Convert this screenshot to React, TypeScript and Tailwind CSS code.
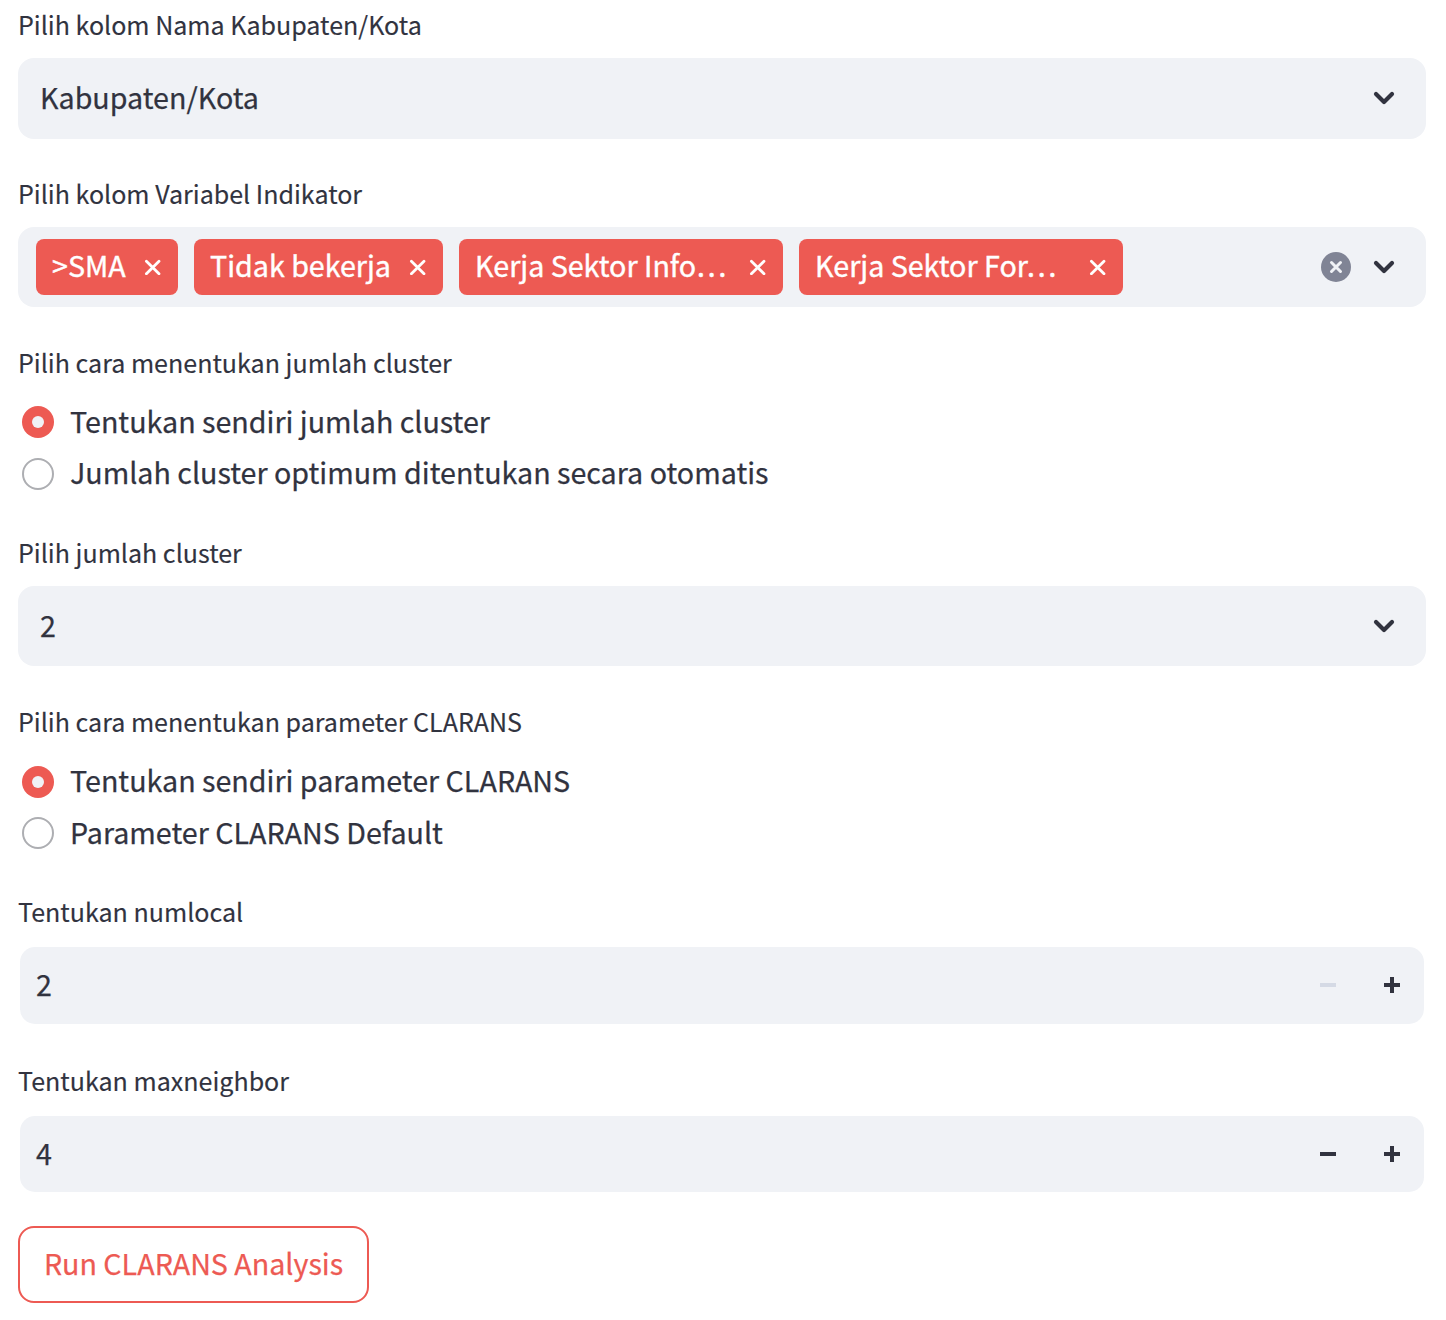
import React from "react";

function Field({ label, height, children }: { label: string; height: string; children: React.ReactNode }) {
  return (
    <section className={height}>
      <div className="h-[58px] pt-1 text-[25.06px] leading-[40px] [-webkit-text-stroke:0.15px]">
        <span>{label}</span>
      </div>
      {children}
    </section>
  );
}

function Chevron() {
  return (
    <svg width="32" height="32" viewBox="0 0 32 32" fill="none" className="shrink-0">
      <path d="M8 12L16 20L24 12" stroke="#31333f" strokeWidth="4.2" strokeLinecap="round" strokeLinejoin="round" />
    </svg>
  );
}

function SelectBox({ value, height }: { value: string; height: string }) {
  return (
    <div className={`${height} flex items-center justify-between rounded-2xl bg-[#f0f2f6] pl-[22px] pr-[26px]`}>
      <span className="block pb-0.5 leading-[46px]">{value}</span>
      <Chevron />
    </div>
  );
}

function Tag({ label, width }: { label: string; width: string }) {
  return (
    <div className={`${width} flex h-14 items-center justify-between rounded-lg bg-[#ed5a53] pl-4 pr-[17px] text-white`}>
      <span className="block whitespace-nowrap pb-1 leading-[46px] [-webkit-text-stroke:0.4px]">{label}</span>
      <svg width="17" height="16" viewBox="0 0 17 16" fill="none" className="shrink-0">
        <path d="M2.4 2.2L15 14.8M15 2.2L2.4 14.8" stroke="white" strokeWidth="2.8" strokeLinecap="round" />
      </svg>
    </div>
  );
}

function Radio({ label, checked, row = "h-[52px]", text = "pb-0.5" }: { label: string; checked?: boolean; row?: string; text?: string }) {
  return (
    <div className={`${row} flex items-center gap-4 pl-1`}>
      {checked ? (
        <span className="flex size-8 items-center justify-center rounded-full bg-[#ed5a53]">
          <span className="size-3 rounded-full bg-[#f0f2f6]" />
        </span>
      ) : (
        <span className="size-8 rounded-full border-2 border-[#adaeb2] bg-white" />
      )}
      <span className={`${text} block leading-[42px]`}>{label}</span>
    </div>
  );
}

function NumberInput({ value, height, atMinimum }: { value: string; height: string; atMinimum?: boolean }) {
  return (
    <div className={`${height} mx-0.5 mt-0.5 flex items-center rounded-[15px] bg-[#f0f2f6] pl-4 pr-6`}>
      <span className="block flex-1 pb-0.5 leading-[42px]">{value}</span>
      <svg width="16" height="16" viewBox="0 0 16 16" className="mr-12">
        <path d="M0 6H16V10H0Z" fill={atMinimum ? "#d5dae5" : "#31333f"} />
      </svg>
      <svg width="16" height="16" viewBox="0 0 16 16">
        <path d="M0 6H6V0H10V6H16V10H10V16H6V10H0Z" fill="#31333f" />
      </svg>
    </div>
  );
}

export default function App() {
  return (
    <div className="h-[1320px] bg-white pl-[18px] pr-5 font-['Noto_Sans_CJK_SC',sans-serif] text-[28.65px] text-[#31333f] [-webkit-text-stroke:0.25px]">
      <Field label="Pilih kolom Nama Kabupaten/Kota" height="h-[169px]">
        <SelectBox value="Kabupaten/Kota" height="h-[80.67px]" />
      </Field>
      <Field label="Pilih kolom Variabel Indikator" height="h-[169px]">
        <div className="flex h-20 items-center gap-4 rounded-2xl bg-[#f0f2f6] pl-[18px] pr-[26px]">
          <Tag label=">SMA" width="w-[142px]" />
          <Tag label="Tidak bekerja" width="w-[249px]" />
          <Tag label="Kerja Sektor Info…" width="w-[324px]" />
          <Tag label="Kerja Sektor For…" width="w-[324px]" />
          <div className="ml-auto flex items-center gap-[17px]">
            <svg width="30" height="30" viewBox="0 0 30 30" fill="none">
              <circle cx="15" cy="15" r="15" fill="#808495" />
              <path d="M10.5 10.5L19.5 19.5M19.5 10.5L10.5 19.5" stroke="#f0f2f6" strokeWidth="3" strokeLinecap="round" />
            </svg>
            <Chevron />
          </div>
        </div>
      </Field>
      <Field label="Pilih cara menentukan jumlah cluster" height="h-[190px]">
        <Radio label="Tentukan sendiri jumlah cluster" checked />
        <Radio label="Jumlah cluster optimum ditentukan secara otomatis" text="pb-1" />
      </Field>
      <Field label="Pilih jumlah cluster" height="h-[169px]">
        <SelectBox value="2" height="h-20" />
      </Field>
      <Field label="Pilih cara menentukan parameter CLARANS" height="h-[190px]">
        <Radio label="Tentukan sendiri parameter CLARANS" checked row="h-[54px]" text="pb-1" />
        <Radio label="Parameter CLARANS Default" row="h-12" />
      </Field>
      <Field label="Tentukan numlocal" height="h-[169px]">
        <NumberInput value="2" height="h-[76.5px]" atMinimum />
      </Field>
      <Field label="Tentukan maxneighbor" height="h-[170px]">
        <NumberInput value="4" height="h-[76px]" />
      </Field>
      <button className="flex h-[77px] w-[351px] items-center justify-center rounded-2xl border-2 border-[#ed5a53] bg-white text-[#ed5a53]">
        <span className="block whitespace-nowrap pb-0.5">Run CLARANS Analysis</span>
      </button>
    </div>
  );
}
